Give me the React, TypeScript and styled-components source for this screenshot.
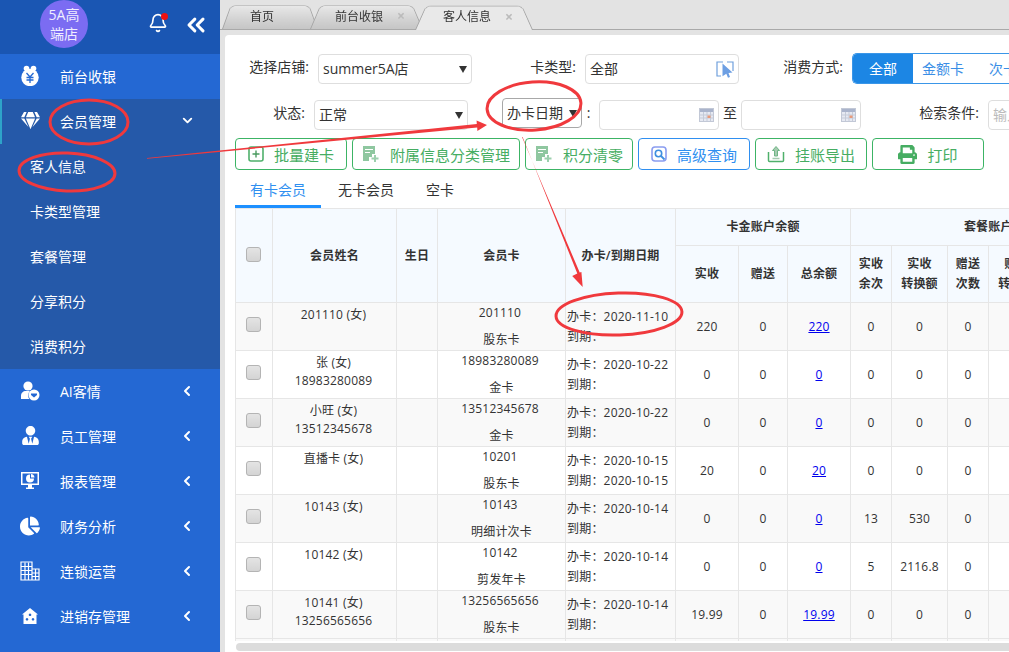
import React from "react";
import styled, { createGlobalStyle } from "styled-components";
import { ChevronDown, ChevronLeft, ChevronsLeft, Bell } from "lucide-react";
import { FaChartPie, FaGem, FaPrint, FaUserTie } from "react-icons/fa";

const Global = createGlobalStyle`
  html, body { margin: 0; padding: 0; overflow: hidden; }
  body {
    font-family: "Open Sans", "Noto Sans CJK SC", sans-serif;
    font-size: 14px;
    color: #333;
  }
  * { box-sizing: border-box; }
`;

const Page = styled.div`
  position: relative;
  display: flex;
  width: 1009px;
  height: 652px;
  overflow: hidden;
  background: #e3e3e3;
`;

/* sidebar */
const Side = styled.aside`
  width: 220px;
  flex: none;
  display: flex;
  flex-direction: column;
  background: #2468d3;
  color: #fff;
`;

const SideHead = styled.div`
  height: 54px;
  flex: none;
  display: flex;
  padding-left: 40px;
  background: #1a56b3;
`;

const Avatar = styled.div`
  width: 48px;
  height: 48px;
  border-radius: 50%;
  background: #7b6cf2;
  font-size: 14px;
  line-height: 19px;
  text-align: center;
  padding: 5px 6px 0;
  color: #f0eeff;
`;

const BellWrap = styled.div`
  position: relative;
  margin: 13px 0 0 60px;
  width: 20px;
  height: 24px;
`;

const Dot = styled.span`
  position: absolute;
  top: 0;
  right: 0;
  width: 7px;
  height: 7px;
  border-radius: 50%;
  background: #f01010;
`;

const Collapse = styled.div`
  margin: 11px 0 0 14px;
`;

const MenuRow = styled.div<{ $open?: boolean }>`
  position: relative;
  height: 45px;
  flex: none;
  display: flex;
  align-items: center;
  padding-bottom: 2px;
  background: ${(p) => (p.$open ? "#2559a9" : "transparent")};
  border-left: ${(p) => (p.$open ? "2px solid #2ea3c9" : "none")};
  padding-left: ${(p) => (p.$open ? "18px" : "20px")};
`;

const MenuIcon = styled.span`
  width: 20px;
  height: 20px;
  display: flex;
  align-items: center;
  justify-content: center;
  margin-right: 20px;
`;

const MenuText = styled.span`
  flex: 1;
`;

const MenuArrow = styled.span`
  width: 16px;
  margin-right: 25px;
  display: flex;
  justify-content: center;
`;

const SubMenu = styled.div`
  background: #2559a9;
`;

const SubRow = styled.div`
  height: 45px;
  line-height: 45px;
  padding-left: 30px;
`;

/* right side */
const Main = styled.main`
  flex: 1;
  min-width: 0;
  display: flex;
  flex-direction: column;
`;

const TabBar = styled.div`
  height: 30px;
  flex: none;
  display: flex;
  padding: 4px 0 0 6px;
  border-bottom: 1px solid #a9a9a9;
`;

const PageTab = styled.div<{ $w: number; $pl?: number; $pr?: number; $active?: boolean }>`
  position: relative;
  width: ${(p) => p.$w}px;
  height: ${(p) => (p.$active ? "26px" : "25px")};
  padding: 0 ${(p) => p.$pr ?? 0}px 2px ${(p) => p.$pl ?? 0}px;
  display: flex;
  align-items: center;
  justify-content: center;
  gap: 14px;
  font-size: 12px;
  z-index: ${(p) => (p.$active ? 2 : 1)};
  &::before {
    content: "";
    position: absolute;
    inset: -5px -4px 0;
    z-index: -1;
    border: 1px solid #a6a6a6;
    border-bottom: none;
    border-radius: 6px 6px 0 0;
    background: ${(p) =>
      p.$active ? "#e9e9e9" : "linear-gradient(#e8e8e8, #c6c6c6)"};
    transform: perspective(40px) rotateX(17deg);
    transform-origin: bottom;
  }
`;

const TabClose = styled.span`
  color: #bbb;
  font-size: 14px;
  font-weight: bold;
`;

const Panel = styled.div`
  flex: 1;
  min-height: 0;
  margin: 5px 0 0 5px;
  padding: 18px 0 0 10px;
  background: #fff;
  border-radius: 4px 0 0 0;
  overflow: hidden;
  display: flex;
  flex-direction: column;
`;

const FormRow = styled.div<{ $mt?: number; $ml?: number }>`
  display: flex;
  align-items: flex-start;
  flex: none;
  height: 31px;
  margin-top: ${(p) => p.$mt ?? 0}px;
  margin-left: ${(p) => p.$ml ?? 0}px;
`;

const Label = styled.label<{ $w: number }>`
  width: ${(p) => p.$w}px;
  flex: none;
  text-align: right;
  line-height: 28px;
  margin-right: 9px;
  white-space: nowrap;
`;

const Spacer = styled.span<{ $w: number }>`
  width: ${(p) => p.$w}px;
  flex: none;
`;

const Control = styled.div<{ $w: number; $top?: number; $dark?: boolean }>`
  position: relative;
  width: ${(p) => p.$w}px;
  flex: none;
  height: 30px;
  margin-top: ${(p) => p.$top ?? 1}px;
  border: 1px solid ${(p) => (p.$dark ? "#a8a8a8" : "#dedede")};
  border-radius: 4px;
  display: flex;
  align-items: center;
  justify-content: space-between;
  padding: 0 4px;
  line-height: 28px;
  white-space: nowrap;
  background: #fff;
`;

const Caret = styled.span`
  width: 0;
  height: 0;
  border-left: 4px solid transparent;
  border-right: 4px solid transparent;
  border-top: 7px solid #333;
`;

const Colon = styled.span`
  width: 17px;
  flex: none;
  padding-right: 4px;
  text-align: center;
  line-height: 28px;
`;

const To = styled.span`
  width: 22px;
  flex: none;
  text-align: center;
  line-height: 28px;
`;

const Placeholder = styled.span`
  color: #bbb;
`;

const Segment = styled.div`
  display: flex;
  flex: none;
  height: 31px;
  border: 1px solid #3a96e8;
  border-right: none;
  border-radius: 5px 0 0 5px;
  overflow: hidden;
`;

const SegItem = styled.span<{ $on?: boolean }>`
  width: 60px;
  flex: none;
  text-align: center;
  line-height: 29px;
  color: ${(p) => (p.$on ? "#fff" : "#3a8ee6")};
  background: ${(p) => (p.$on ? "#1c86e4" : "#fff")};
`;

const Buttons = styled.div`
  display: flex;
  flex: none;
  gap: 5px;
  margin-top: 8px;
`;

const Btn = styled.button<{ $w: number; $blue?: boolean }>`
  width: ${(p) => p.$w}px;
  height: 32px;
  flex: none;
  display: flex;
  align-items: center;
  justify-content: center;
  gap: 10px;
  padding: 0;
  background: #fff;
  font-family: inherit;
  font-size: 15px;
  border-radius: 4px;
  color: ${(p) => (p.$blue ? "#2f8ff0" : "#46ad62")};
  border: 1px solid ${(p) => (p.$blue ? "#2f8ff0" : "#3cb465")};
`;

const CardTabs = styled.div`
  display: flex;
  flex: none;
  height: 38px;
  gap: 2px;
`;

const CardTab = styled.div<{ $on?: boolean }>`
  padding: 5px 15px 0;
  line-height: 30px;
  color: ${(p) => (p.$on ? "#2f8ff0" : "#333")};
  border-bottom: 3px solid ${(p) => (p.$on ? "#1e90ff" : "transparent")};
`;

const TableBox = styled.div`
  height: 433px;
  flex: none;
  overflow: hidden;
`;

const Table = styled.table`
  width: 915px;
  table-layout: fixed;
  border-collapse: collapse;
  font-size: 12px;
  letter-spacing: 0.2px;
  th, td { border: 1px solid #e6e6e6; padding: 0; }
`;

const Th = styled.th<{ $h?: number }>`
  height: ${(p) => p.$h ?? 37}px;
  background: #f5faff;
  text-align: center;
  font-weight: 600;
  line-height: 20px;
  color: #333;
`;

const Tr = styled.tr<{ $odd: boolean }>`
  height: 48px;
  background: ${(p) => (p.$odd ? "#f9f9f9" : "#fff")};
`;

const CheckTd = styled.td`
  text-align: center;
`;

const Check = styled.span`
  display: inline-block;
  width: 15px;
  height: 15px;
  vertical-align: middle;
  margin: 0 2px 4px 0;
  border: 1px solid #b4b4b4;
  border-radius: 3px;
  background: linear-gradient(#e4e4e4, #d4d4d4);
`;

const NameTd = styled.td`
  vertical-align: top;
  text-align: center;
  padding: 3px 2px 0 0 !important;
  line-height: 18px;
`;

const CardTd = styled.td`
  vertical-align: top;
  text-align: center;
  line-height: 20px;
`;

const CardNo = styled.div`
  margin-bottom: 7px;
  padding-right: 3px;
`;

const DateTd = styled.td`
  padding: 0 0 0 1px !important;
  line-height: 20px;
  white-space: nowrap;
`;

const NumTd = styled.td`
  text-align: center;
`;

const Link = styled.a`
  color: #0000ee;
  text-decoration: underline;
`;

const ScrollBar = styled.div`
  height: 8px;
  flex: none;
  margin: 2px 0 0 1px;
  border-radius: 4px 0 0 4px;
  background: #dcdcdc;
`;

const Marks = styled.svg`
  position: absolute;
  left: 0;
  top: 0;
  pointer-events: none;
`;

/* drawings */
const MoneyBag = () => (
  <svg width="20" height="21" viewBox="0 0 20 21" fill="#fff">
    <circle cx="6.5" cy="3.5" r="2.8" />
    <circle cx="13.5" cy="3.5" r="2.8" />
    <circle cx="10" cy="12.5" r="8.7" />
    <path d="M6.5 8l3.5 4 3.5-4M6.5 12.5h7M6.5 15h7M10 12v6" stroke="#2468d3" strokeWidth="1.3" fill="none" />
  </svg>
);

const UserShield = () => (
  <svg width="20" height="20" viewBox="0 0 20 20" fill="#fff">
    <circle cx="8" cy="5" r="4.6" />
    <path d="M1 18v-3c0-3 2-5 5-5h4c-2 2-2.500 6-.5 8z" />
    <circle cx="14" cy="14" r="5.500" />
    <path d="M11 12.500h6v1.500l-3 2.600-3-2.600z" fill="#2468d3" />
  </svg>
);

const Monitor = () => (
  <svg width="20" height="20" viewBox="0 0 20 20" fill="#fff">
    <path fillRule="evenodd" d="M1 1h18v13H1zM2.500 2.500v10h15v-10z" />
    <path d="M10 3.500a4 4 0 1 0 4 4h-4z" />
    <path d="M11 3a4 4 0 0 1 3.500 3.500H11z" />
    <path d="M8 14h4v2.500h2V18H6v-1.500h2z" />
  </svg>
);

const Building = () => (
  <svg width="20" height="20" viewBox="0 0 20 20" fill="none" stroke="#fff" strokeWidth="1.2">
    <path d="M1 19V1h11v18zM12 8h7v11h-7z" />
    <path d="M1 5.500h11M1 9.500h11M1 13.500h11M5 1.500V19M8.500 1.500V19M12 12h7M12 15.500h7M15.500 8v11" />
  </svg>
);

const House = () => (
  <svg width="16" height="16" viewBox="0 0 16 16" fill="#fff">
    <path fillRule="evenodd" d="M8 0l8 6.500h-1.500V16h-13V6.500H0zM8 5.500a1.300 1.300 0 1 0 .01 0zM5 10a1.300 1.300 0 1 0 .01 0zM11 10a1.300 1.300 0 1 0 .01 0z" />
  </svg>
);

const Calendar = () => (
  <svg width="15" height="14" viewBox="0 0 15 14">
    <rect x="0.500" y="0.500" width="14" height="13" fill="#e6e9f2" stroke="#c2c8d6" />
    <rect x="1" y="1" width="13" height="3" fill="#aab4cc" />
    <path d="M1 7h13M1 10h13M4.500 4v9M8 4v9M11.500 4v9" stroke="#c5cbd8" />
    <rect x="8.500" y="7.500" width="3" height="2.500" fill="#e89a7a" />
  </svg>
);

const Picker = () => (
  <svg width="18" height="18" viewBox="0 0 18 18">
    <path d="M7 2H1v14h4M11 2h6v9" fill="none" stroke="#6f9fdc" strokeWidth="1.2" />
    <path d="M6.500 3.500l10 9-4 .5 1.500 4-2 .8-1.700-4-3.800 2.500z" fill="#6d9fe3" />
  </svg>
);

const AddBox = () => (
  <svg width="16" height="18" viewBox="0 0 16 18" fill="none">
    <rect x="1" y="2" width="14" height="14" rx="2" stroke="#4fb06b" strokeWidth="1.600" />
    <path d="M8 5.500v7M4.500 9h7" stroke="#4a9a5f" strokeWidth="1.400" />
  </svg>
);

const DocPlus = () => (
  <svg width="18" height="18" viewBox="0 0 18 18" fill="none">
    <path d="M1 1h12v8h-3v3H7v4H1z" fill="#8fc7a0" />
    <path d="M3 4.500h8M3 7.500h5" stroke="#fff" strokeWidth="1.200" />
    <path d="M13 10v7M9.500 13.500h7" stroke="#9ccfad" strokeWidth="2" />
  </svg>
);

const SearchBox = () => (
  <svg width="16" height="16" viewBox="0 0 16 16" fill="none">
    <rect x="1" y="1" width="14" height="14" rx="3" stroke="#8b9df0" strokeWidth="1.600" />
    <circle cx="7.500" cy="7.500" r="3.200" stroke="#3f8fe0" strokeWidth="1.600" />
    <path d="M10 10l3.500 3.500" stroke="#3f8fe0" strokeWidth="1.800" />
  </svg>
);

const Upload = () => (
  <svg width="18" height="18" viewBox="0 0 18 18" fill="none">
    <path d="M1.500 7v8.500c0 .6.400 1 1 1h13c.6 0 1-.4 1-1V7" stroke="#4fb06b" strokeWidth="1.500" />
    <path d="M9 1.500L5.500 5.500h2V11h3V5.500h2z" fill="#a5cbb0" stroke="#6fb585" />
    <path d="M5.500 13.500h7" stroke="#a5cbb0" strokeWidth="1.500" />
  </svg>
);

const menuBelow = [
  { text: "AI客情", icon: <UserShield /> },
  { text: "员工管理", icon: <FaUserTie size={19} /> },
  { text: "报表管理", icon: <Monitor /> },
  { text: "财务分析", icon: <FaChartPie size={20} /> },
  { text: "连锁运营", icon: <Building /> },
  { text: "进销存管理", icon: <House /> },
];

const subMenu = ["客人信息", "卡类型管理", "套餐管理", "分享积分", "消费积分"];

interface Member {
  name: string;
  phone?: string;
  card: string;
  cardType: string;
  open: string;
  due?: string;
  real: string;
  total: string;
  times: string;
  convert: string;
}

const members: Member[] = [
  { name: "201110 (女)", card: "201110", cardType: "股东卡", open: "2020-11-10", real: "220", total: "220", times: "0", convert: "0" },
  { name: "张 (女)", phone: "18983280089", card: "18983280089", cardType: "金卡", open: "2020-10-22", real: "0", total: "0", times: "0", convert: "0" },
  { name: "小旺 (女)", phone: "13512345678", card: "13512345678", cardType: "金卡", open: "2020-10-22", real: "0", total: "0", times: "0", convert: "0" },
  { name: "直播卡 (女)", card: "10201", cardType: "股东卡", open: "2020-10-15", due: "2020-10-15", real: "20", total: "20", times: "0", convert: "0" },
  { name: "10143 (女)", card: "10143", cardType: "明细计次卡", open: "2020-10-14", real: "0", total: "0", times: "13", convert: "530" },
  { name: "10142 (女)", card: "10142", cardType: "剪发年卡", open: "2020-10-14", real: "0", total: "0", times: "5", convert: "2116.8" },
  { name: "10141 (女)", phone: "13256565656", card: "13256565656", cardType: "股东卡", open: "2020-10-14", real: "19.99", total: "19.99", times: "0", convert: "0" },
];

const colWidths = [37, 124, 41, 128, 110, 63, 49, 63, 41, 56, 41, 56, 41, 65];

export default function App() {
  return (
    <Page>
      <Global />
      <Side>
        <SideHead>
          <Avatar>5A高端店</Avatar>
          <BellWrap>
            <Bell size={20} strokeWidth={2} />
            <Dot />
          </BellWrap>
          <Collapse>
            <ChevronsLeft size={28} strokeWidth={2.600} />
          </Collapse>
        </SideHead>
        <MenuRow>
          <MenuIcon><MoneyBag /></MenuIcon>
          <MenuText>前台收银</MenuText>
        </MenuRow>
        <MenuRow $open>
          <MenuIcon><FaGem size={19} /></MenuIcon>
          <MenuText>会员管理</MenuText>
          <MenuArrow><ChevronDown size={15} strokeWidth={3} /></MenuArrow>
        </MenuRow>
        <SubMenu>
          {subMenu.map((s) => (
            <SubRow key={s}>{s}</SubRow>
          ))}
        </SubMenu>
        {menuBelow.map((m) => (
          <MenuRow key={m.text}>
            <MenuIcon>{m.icon}</MenuIcon>
            <MenuText>{m.text}</MenuText>
            <MenuArrow><ChevronLeft size={16} strokeWidth={3} /></MenuArrow>
          </MenuRow>
        ))}
      </Side>

      <Main>
        <TabBar>
          <PageTab $w={88} $pr={16}>首页</PageTab>
          <PageTab $w={105} $pl={7}>前台收银<TabClose>×</TabClose></PageTab>
          <PageTab $w={110} $pl={8} $active>客人信息<TabClose>×</TabClose></PageTab>
        </TabBar>
        <Panel>
          <FormRow $ml={14}>
            <Label $w={60}>选择店铺:</Label>
            <Control $w={154}>summer5A店<Caret /></Control>
            <Label $w={104}>卡类型:</Label>
            <Control $w={154}>全部<Picker /></Control>
            <Label $w={104}>消费方式:</Label>
            <Segment>
              <SegItem $on>全部</SegItem>
              <SegItem>金额卡</SegItem>
              <SegItem>次卡</SegItem>
            </Segment>
          </FormRow>
          <FormRow $mt={15}>
            <Label $w={70}>状态:</Label>
            <Control $w={154}>正常<Caret /></Control>
            <Spacer $w={34} />
            <Control $w={80} $top={-1} $dark>办卡日期<Caret /></Control>
            <Colon>:</Colon>
            <Control $w={120}>
              <span />
              <Calendar />
            </Control>
            <To>至</To>
            <Control $w={120}>
              <span />
              <Calendar />
            </Control>
            <Label $w={118}>检索条件:</Label>
            <Control $w={60}><Placeholder>输入卡号</Placeholder></Control>
          </FormRow>
          <Buttons>
            <Btn $w={112}><AddBox />批量建卡</Btn>
            <Btn $w={168}><DocPlus />附属信息分类管理</Btn>
            <Btn $w={108}><DocPlus />积分清零</Btn>
            <Btn $w={112} $blue><SearchBox />高级查询</Btn>
            <Btn $w={112}><Upload />挂账导出</Btn>
            <Btn $w={112}><FaPrint size={19} color="#46ad62" />打印</Btn>
          </Buttons>
          <CardTabs>
            <CardTab $on>有卡会员</CardTab>
            <CardTab>无卡会员</CardTab>
            <CardTab>空卡</CardTab>
          </CardTabs>
          <TableBox>
            <Table>
              <colgroup>
                {colWidths.map((w, i) => (
                  <col key={i} width={w} />
                ))}
              </colgroup>
              <thead>
                <tr>
                  <Th rowSpan={2}><Check /></Th>
                  <Th rowSpan={2}>会员姓名</Th>
                  <Th rowSpan={2}>生日</Th>
                  <Th rowSpan={2}>会员卡</Th>
                  <Th rowSpan={2}>办卡/到期日期</Th>
                  <Th colSpan={3}>卡金账户余额</Th>
                  <Th colSpan={6}>套餐账户余额</Th>
                </tr>
                <tr>
                  <Th $h={57}>实收</Th>
                  <Th $h={57}>赠送</Th>
                  <Th $h={57}>总余额</Th>
                  <Th $h={57}>实收<br />余次</Th>
                  <Th $h={57}>实收<br />转换额</Th>
                  <Th $h={57}>赠送<br />次数</Th>
                  <Th $h={57}>赠送<br />转换额</Th>
                  <Th $h={57}>总<br />余次</Th>
                  <Th $h={57}>总<br />转换额</Th>
                </tr>
              </thead>
              <tbody>
                {members.map((m, i) => (
                  <Tr key={m.card} $odd={i % 2 === 0}>
                    <CheckTd><Check /></CheckTd>
                    <NameTd>
                      {m.name}
                      {m.phone && <div>{m.phone}</div>}
                    </NameTd>
                    <td />
                    <CardTd>
                      <CardNo>{m.card}</CardNo>
                      <div>{m.cardType}</div>
                    </CardTd>
                    <DateTd>
                      <div>办卡：{m.open}</div>
                      <div>到期：{m.due}</div>
                    </DateTd>
                    <NumTd>{m.real}</NumTd>
                    <NumTd>0</NumTd>
                    <NumTd><Link href="#">{m.total}</Link></NumTd>
                    <NumTd>{m.times}</NumTd>
                    <NumTd>{m.convert}</NumTd>
                    <NumTd>0</NumTd>
                    <NumTd>0</NumTd>
                    <NumTd>{m.times}</NumTd>
                    <NumTd>{m.convert}</NumTd>
                  </Tr>
                ))}
                <Tr $odd>
                  {colWidths.map((w, i) => (
                    <td key={i} />
                  ))}
                </Tr>
              </tbody>
            </Table>
          </TableBox>
          <ScrollBar />
        </Panel>
      </Main>

      <Marks width="1009" height="652" viewBox="0 0 1009 652" fill="none" stroke="#f0393d" strokeWidth="3">
        <ellipse cx="89" cy="122" rx="39" ry="22" />
        <ellipse cx="67" cy="172" rx="48" ry="19" transform="rotate(2 67 172)" />
        <ellipse cx="534" cy="106" rx="47" ry="24" transform="rotate(-4 534 106)" />
        <ellipse cx="619" cy="314" rx="63" ry="21" transform="rotate(-2 619 314)" />
        <polygon points="147,158 476.800,124 476.600,120.500 487,125 477.400,131 477.200,127.500 147,158.700" fill="#f0393d" stroke="none" />
        <polygon points="522,137 579.700,272.500 581.400,272 582.700,287 572.200,276 577.300,273.500 522.600,137" fill="#f0393d" stroke="none" />
      </Marks>
    </Page>
  );
}
